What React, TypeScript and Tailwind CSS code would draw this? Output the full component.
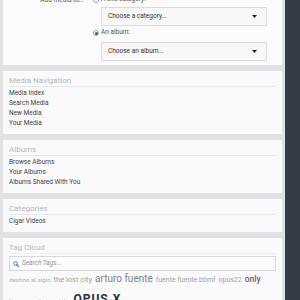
import React from 'react';

const font = { fontFamily: 'Roboto, "Liberation Sans", sans-serif' };

const Caret: React.FC = () => (
  <svg width="5" height="3" viewBox="0 0 5 3" className="shrink-0">
    <path d="M0 0h5L2.5 3z" fill="#222" />
  </svg>
);

const Radio: React.FC<{ checked?: boolean }> = ({ checked }) => (
  <span className="w-[6px] h-[6px] rounded-full border border-[#9aa0a8] bg-white flex items-center justify-center shrink-0">
    {checked && <span className="w-[3px] h-[3px] rounded-full bg-[#555]" />}
  </span>
);

const Select: React.FC<{ label: string; h: string }> = ({ label, h }) => (
  <div className={`${h} ml-[8px] w-[166px] border border-[#dcdcdc] bg-[#f8f8f8] flex items-center justify-between pl-[6px] pr-[9px]`}>
    <span className="text-[6.5px] text-[#333]">{label}</span>
    <Caret />
  </div>
);

const Panel: React.FC<{ title: string; children: React.ReactNode }> = ({ title, children }) => (
  <div className="bg-[#fafafa] px-[6px] pt-[5px] pb-[6px]">
    <div className="h-[11px] text-[8px] leading-[10px] text-[#b4b9c1] border-b border-[#e8e8e8]">{title}</div>
    <div className="pt-[1px]">{children}</div>
  </div>
);

const Links: React.FC<{ items: string[] }> = ({ items }) => (
  <ul>
    {items.map((i) => (
      <li key={i} className="text-[6.5px] leading-[10px] text-[#3b3f46]">{i}</li>
    ))}
  </ul>
);

const tags: { t: string; c: string }[] = [
  { t: 'destino al siglo', c: 'text-[6.2px] text-[#aab0ba]' },
  { t: 'the lost city', c: 'text-[7.5px] text-[#9aa1ac]' },
  { t: 'arturo fuente', c: 'text-[10px] text-[#7a828e]' },
  { t: 'fuente fuente bbmf', c: 'text-[7px] text-[#9aa1ac]' },
  { t: 'opus22', c: 'text-[7px] text-[#9aa1ac]' },
  { t: 'only', c: 'text-[8.5px] text-[#5f6773] font-medium' },
  { t: 'forever', c: 'text-[6px] text-[#aab0ba]' },
  { t: 'padron', c: 'text-[6px] text-[#aab0ba]' },
  { t: 'cohiba', c: 'text-[6px] text-[#aab0ba]' },
  { t: 'OPUS X', c: 'text-[12px] text-[#2b3038] font-bold tracking-[1px]' },
];

export default function App() {
  return (
    <div className="w-[300px] h-[300px] overflow-hidden bg-[#e0e2e5] flex" style={font}>
      <div className="w-[285px] px-[3px] flex flex-col gap-[6px]">
        {/* Add media form */}
        <div className="bg-[#fbfbfb] mt-[-10px] pt-[5px] pb-[4px] flex">
          <div className="w-[81px] text-right text-[6.5px] leading-[10px] text-[#555]">Add media to...</div>
          <div className="ml-[9px] flex flex-col">
            <div className="h-[10px] flex items-center gap-[2px]">
              <Radio />
              <span className="text-[6.5px] text-[#555]">A site category:</span>
            </div>
            <div className="mt-[2px]"><Select label="Choose a category..." h="h-[19px]" /></div>
            <div className="h-[10px] mt-[2px] flex items-center gap-[2px]">
              <Radio checked />
              <span className="text-[6.5px] text-[#555]">An album:</span>
            </div>
            <div className="mt-[4px]"><Select label="Choose an album..." h="h-[19px]" /></div>
          </div>
        </div>

        <Panel title="Media Navigation">
          <Links items={['Media Index', 'Search Media', 'New Media', 'Your Media']} />
        </Panel>

        <Panel title="Albums">
          <Links items={['Browse Albums', 'Your Albums', 'Albums Shared With You']} />
        </Panel>

        <Panel title="Categories">
          <Links items={['Cigar Videos']} />
        </Panel>

        <div className="bg-[#fafafa] px-[6px] pt-[5px] pb-[6px]">
          <div className="h-[11px] text-[8px] leading-[10px] text-[#b4b9c1] border-b border-[#f0f0f0]">Tag Cloud</div>
          <div className="mt-[2px] h-[15px] border border-[#d8d8d8] bg-[#fcfcfc] flex items-center gap-[3px] px-[3px]">
            <svg width="6" height="6" viewBox="0 0 12 12" className="shrink-0">
              <circle cx="5" cy="5" r="3.6" fill="none" stroke="#3b7fd1" strokeWidth="2" />
              <path d="M7.5 7.5L11 11" stroke="#3b7fd1" strokeWidth="2.4" strokeLinecap="round" />
            </svg>
            <span className="text-[6.5px] italic text-[#8d939b]">Search Tags...</span>
          </div>
          <div className="mt-[1px] flex flex-wrap items-baseline gap-x-[3px] gap-y-[5px] leading-[14px]">
            {tags.map((t) => (
              <span key={t.t} className={t.c}>{t.t}</span>
            ))}
          </div>
        </div>
      </div>
      <div className="w-[15px] bg-[#363c46]" />
    </div>
  );
}
